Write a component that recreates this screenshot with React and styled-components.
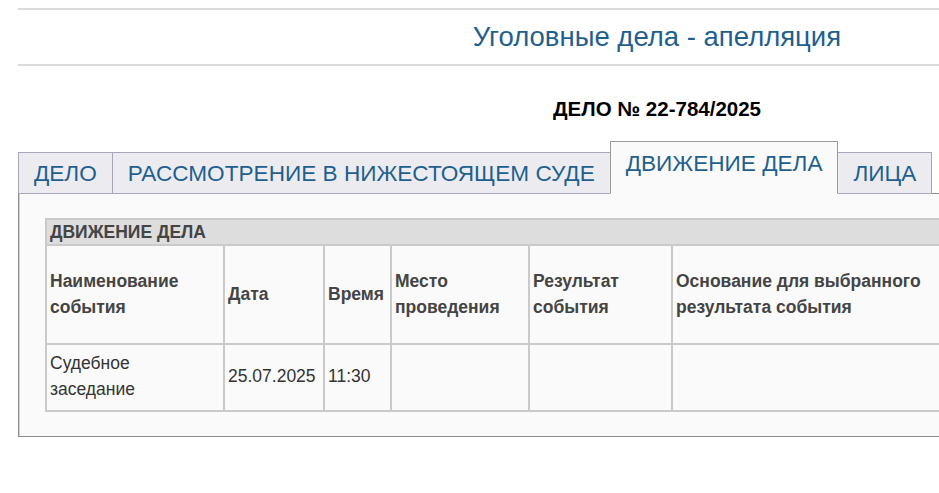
import React from "react";
import styled, { createGlobalStyle } from "styled-components";

const Global = createGlobalStyle`
  html, body { margin: 0; padding: 0; background: #fff; overflow: hidden; }
  body { font-family: "Liberation Sans", Arial, sans-serif; }
`;

const Page = styled.div`
  padding: 8px 0 0 18px;
  width: 1278px;
`;

const Header = styled.div`
  border-top: 2px solid #dcdcdc;
  border-bottom: 2px solid #dcdcdc;
  height: 54px;
  display: flex;
  align-items: center;
  justify-content: center;
`;

const Title = styled.h1`
  margin: 0;
  font-weight: normal;
  font-size: 27.5px;
  color: #1f5f8f;
`;

const CaseNo = styled.div`
  margin-top: 31px;
  text-align: center;
  font-weight: bold;
  font-size: 20.5px;
  color: #000;
  line-height: 24px;
`;

const Tabs = styled.div`
  margin-top: 20px;
  display: flex;
  align-items: flex-end;
  position: relative;
  z-index: 1;
  margin-bottom: -1px;
`;

const Tab = styled.div`
  font-size: 22.6px;
  color: #1f5f8f;
  padding: ${(p) => (p.$active ? "9px 15px 16px" : "8px 15px 6px")};
  line-height: 26px;
  background: ${(p) => (p.$active ? "#fafafa" : "#ececf0")};
  border: 1px solid ${(p) => (p.$active ? "#9a9a9a" : "#a6a6bc")};
  border-bottom: ${(p) => (p.$active ? "1px solid #fafafa" : "1px solid #a6a6bc")};
  margin-left: ${(p) => (p.$first ? "0" : "-1px")};
  position: relative;
  z-index: ${(p) => (p.$active ? 2 : 0)};
  white-space: nowrap;
`;

const Panel = styled.div`
  background: #fafafa;
  border: 1px solid #8e8e8e;
  box-shadow: 1px 1px 0 #c8c8c8, inset 1px 0 0 #d0d0d0;
  padding: 24px 26px 24px 26px;
`;

const Table = styled.table`
  border-collapse: collapse;
  table-layout: fixed;
  font-size: 17.5px;
  line-height: 25.5px;
  color: #333;
`;

const Caption = styled.td`
  background: #dddddd;
  border: 2px solid #cacaca;
  font-weight: bold;
  color: #444;
  padding: 0 3px;
  height: 24px;
  line-height: 24px;
`;

const Th = styled.td`
  border: 2px solid #cacaca;
  font-weight: bold;
  color: #444;
  padding: 0 3px;
  height: 97px;
  vertical-align: middle;
  text-align: left;
`;

const Td = styled.td`
  border: 2px solid #cacaca;
  padding: 6px ${(p) => (p.$narrow ? "40px" : "3px")} 8px 3px;
  vertical-align: middle;
`;

const cols = [178, 100, 67, 138, 143, 300];

export default function App() {
  const headers = [
    "Наименование события",
    "Дата",
    "Время",
    "Место проведения",
    "Результат события",
    "Основание для выбранного результата события",
  ];
  const row = ["Судебное заседание", "25.07.2025", "11:30", "", "", ""];
  const total = cols.reduce((a, b) => a + b, 0);
  return (
    <>
      <Global />
      <Page>
        <Header>
          <Title>Уголовные дела - апелляция</Title>
        </Header>
        <CaseNo>ДЕЛО № 22-784/2025</CaseNo>
        <Tabs>
          <Tab $first>ДЕЛО</Tab>
          <Tab>РАССМОТРЕНИЕ В НИЖЕСТОЯЩЕМ СУДЕ</Tab>
          <Tab $active>ДВИЖЕНИЕ ДЕЛА</Tab>
          <Tab>ЛИЦА</Tab>
        </Tabs>
        <Panel>
          <Table style={{ width: total }}>
            <colgroup>
              {cols.map((w, i) => (
                <col key={i} style={{ width: w }} />
              ))}
            </colgroup>
            <tbody>
              <tr>
                <Caption colSpan={cols.length}>ДВИЖЕНИЕ ДЕЛА</Caption>
              </tr>
              <tr>
                {headers.map((h, i) => (
                  <Th key={i}>{h}</Th>
                ))}
              </tr>
              <tr>
                {row.map((c, i) => (
                  <Td key={i} $narrow={i === 0}>
                    {c}
                  </Td>
                ))}
              </tr>
            </tbody>
          </Table>
        </Panel>
      </Page>
    </>
  );
}
